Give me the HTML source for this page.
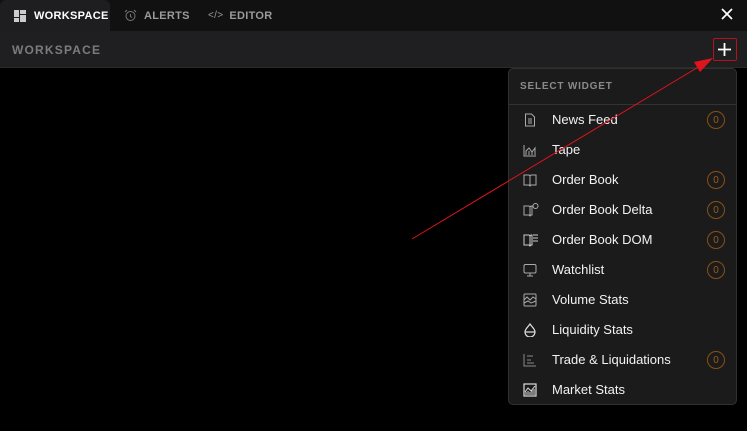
<!DOCTYPE html><html><head><style>
*{margin:0;padding:0;box-sizing:border-box}
body{width:747px;height:431px;background:#000;font-family:"Liberation Sans",sans-serif;position:relative;overflow:hidden}
svg{flex-shrink:0;display:block}
.top{position:absolute;left:0;top:0;width:747px;height:31px;background:#111112}
.tab{position:absolute;top:0;height:31px;display:flex;align-items:center;font-weight:bold;font-size:11px;letter-spacing:.3px;color:#9a9a9a}
.act{left:0;width:110px;background:#1e1e20;border-radius:6px 6px 0 0;color:#fff;padding-left:14px}
.bar{position:absolute;left:0;top:31px;width:747px;height:37px;background:#1f1f21;border-bottom:1px solid #2a2a2a}
.bar span{position:absolute;left:12px;top:12px;font-weight:bold;font-size:12px;letter-spacing:1.2px;color:#7c7c7c}
.menu{position:absolute;left:508px;top:68px;width:229px;height:337px;background:#1b1b1b;border:1px solid #303030;border-radius:5px}
.hd{height:36px;border-bottom:1px solid #333;font-size:10px;font-weight:bold;letter-spacing:.8px;color:#8a8a8a;padding:12px 0 0 11px}
.row{position:absolute;left:0;width:229px;height:30px}
.row .t{position:absolute;left:43px;top:7px;font-size:13px;color:#f2f2f2}
.row svg{position:absolute;left:14px;top:8px}
.b{position:absolute;left:198px;top:6px;width:18px;height:18px;border:1.3px solid #8a4f16;border-radius:50%;color:#9a5a1a;font-size:10px;display:flex;align-items:center;justify-content:center}
</style></head><body>
<div class="top">
<div class="tab act"><svg width="12" height="12" viewBox="0 0 12 12" style="margin-right:8px"><rect x="0" y="0" width="5" height="7" fill="#ccc"/><rect x="0" y="8" width="5" height="4" fill="#ccc"/><rect x="6" y="0" width="6" height="4" fill="#ccc"/><rect x="6" y="5" width="6" height="7" fill="#ccc"/></svg>WORKSPACE</div>
<div class="tab" style="left:124px"><svg width="13" height="13" viewBox="0 0 13 13" style="margin-right:7px"><circle cx="6.5" cy="7" r="4.5" fill="none" stroke="#777"/><path d="M6.5 5v2.5l1.5 1M1 3l2-2M12 3l-2-2" stroke="#777" fill="none"/></svg>ALERTS</div>
<div class="tab" style="left:208px"><span style="font-weight:normal;color:#999;margin-right:6px;font-size:10px">&lt;/&gt;</span>EDITOR</div>
<svg style="position:absolute;left:721px;top:8px" width="12" height="12" viewBox="0 0 12 12"><path d="M1 1l10 10M11 1L1 11" stroke="#fff" stroke-width="1.7"/></svg>
</div>
<div class="bar"><span>WORKSPACE</span></div>
<div style="position:absolute;left:713px;top:38px;width:24px;height:23px;border:1.5px solid #b0141c;border-radius:2px"></div>
<svg style="position:absolute;left:717px;top:42px" width="15" height="15" viewBox="0 0 15 15"><path d="M7.5 1v13M1 7.5h13" stroke="#fff" stroke-width="1.8"/></svg>
<div class="menu"><div class="hd">SELECT WIDGET</div>
<div class="row" style="top:36px"><svg width="14" height="14" viewBox="0 0 14 14"><path d="M2.5 1h6l3 3v9h-9z M5 6h4M5 8h4M5 10h4" stroke="#aaa" fill="none"/></svg><span class="t">News Feed</span><div class="b">0</div></div>
<div class="row" style="top:66px"><svg width="14" height="14" viewBox="0 0 14 14"><path d="M1 2v11h12M3 12V8l3-3 3 4 3-4v7M6 12V8M9 12V9" stroke="#aaa" fill="none"/></svg><span class="t">Tape</span></div>
<div class="row" style="top:96px"><svg width="14" height="14" viewBox="0 0 14 14"><path d="M1 2h5l1 1 1-1h5v10H8l-1 1-1-1H1zM7 3v10" stroke="#aaa" fill="none"/></svg><span class="t">Order Book</span><div class="b">0</div></div>
<div class="row" style="top:126px"><svg width="16" height="14" viewBox="0 0 16 14"><path d="M1 3h5l1 1 1-1h1v9H8l-1 1-1-1H1zM7 4v9" stroke="#aaa" fill="none"/><circle cx="12.5" cy="3" r="2.5" stroke="#aaa" fill="none"/></svg><span class="t">Order Book Delta</span><div class="b">0</div></div>
<div class="row" style="top:156px"><svg width="16" height="14" viewBox="0 0 16 14"><path d="M1 2h5l1 1 1-1h1v10H8l-1 1-1-1H1zM7 3v10M10 2h5M10 5h5M10 8h5" stroke="#ccc" fill="none"/></svg><span class="t">Order Book DOM</span><div class="b">0</div></div>
<div class="row" style="top:186px"><svg width="14" height="14" viewBox="0 0 14 14"><rect x="1" y="1.5" width="12" height="8.5" rx="1.5" stroke="#aaa" fill="none"/><path d="M7 10v3M4 13h6" stroke="#aaa"/></svg><span class="t">Watchlist</span><div class="b">0</div></div>
<div class="row" style="top:216px"><svg width="14" height="14" viewBox="0 0 14 14"><rect x="1" y="1" width="12" height="12" rx="1" stroke="#aaa" fill="none"/><path d="M1 7l3-3 3 3 3-3 3 2M1 10l4-2 3 2 5-2" stroke="#aaa" fill="none"/></svg><span class="t">Volume Stats</span></div>
<div class="row" style="top:246px"><svg width="14" height="14" viewBox="0 0 14 14"><path d="M7 1C5 4 2 6 2 9a5 5 0 0010 0C12 6 9 4 7 1zM2 9h10" stroke="#ddd" fill="none" stroke-width="1.2"/></svg><span class="t">Liquidity Stats</span></div>
<div class="row" style="top:276px"><svg width="14" height="14" viewBox="0 0 14 14"><path d="M1 1v12h12M4 3h6M4 7h4M4 10h7" stroke="#888" fill="none"/></svg><span class="t">Trade &amp; Liquidations</span><div class="b">0</div></div>
<div class="row" style="top:306px"><svg width="14" height="14" viewBox="0 0 14 14"><rect x="1" y="1" width="12" height="12" stroke="#ddd" fill="none" stroke-width="1.2"/><path d="M2 9l3-4 3 3 4-5M3 12V9M5 12V8M7 12V9M9 12V7M11 12V6" stroke="#ddd" fill="none"/></svg><span class="t">Market Stats</span></div>
</div>
<svg style="position:absolute;left:0;top:0" width="747" height="431"><line x1="412" y1="239" x2="700" y2="66" stroke="#e0141c" stroke-width="1"/><polygon points="713,58 694,62 700,72" fill="#e0141c"/></svg>
</body></html>
